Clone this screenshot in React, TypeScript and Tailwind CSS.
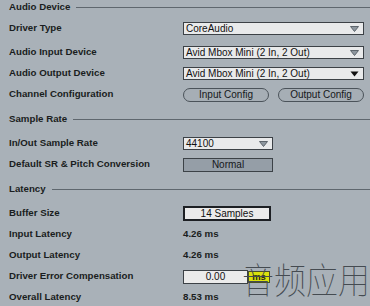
import type { ReactNode } from "react";

const labelFont = { fontFamily: '"Liberation Sans", Arial, sans-serif' };

const Arrow = ({ solid }: { solid?: boolean }) => (
  <svg width="9" height="6" viewBox="0 0 9 6" className="shrink-0">
    {solid ? (
      <path d="M0.5 0.5 H8.5 L4.5 5.5 Z" fill="#111" />
    ) : (
      <path d="M0.5 0.5 H8.5 L4.5 5.5 Z" fill="#8e979f" stroke="#5d656c" strokeWidth="1" />
    )}
  </svg>
);

const Section = ({ title, className }: { title: string; className?: string }) => (
  <div className={`flex h-[15px] items-center pl-[9px] ${className ?? ""}`}>
    <span className="text-[9.7px] font-bold text-[#1a1d20]">{title}</span>
    <div className="ml-[6px] h-px flex-1 bg-[#5f676e]" />
  </div>
);

const Row = ({
  label,
  children,
  className,
}: {
  label: string;
  children?: ReactNode;
  className?: string;
}) => (
  <div className={`flex h-[21px] items-center ${className ?? ""}`}>
    <div className="w-[183px] shrink-0 pl-[9px] text-[9.7px] font-bold text-[#1a1d20]">
      {label}
    </div>
    <div className="flex items-center">{children}</div>
  </div>
);

const Dropdown = ({
  value,
  width,
  solid,
}: {
  value: string;
  width: string;
  solid?: boolean;
}) => (
  <div
    className={`flex h-[13px] items-center justify-between border border-[#3c4146] bg-[#e9eaeb] pl-[2px] pr-[4px] text-[10px] leading-none text-[#111] ${width}`}
  >
    <span>{value}</span>
    <Arrow solid={solid} />
  </div>
);

const Pill = ({ text, width }: { text: string; width: string }) => (
  <div
    className={`flex h-[14px] items-center justify-center rounded-full border border-[#4b535a] bg-[#a6aeb5] text-[10px] leading-none text-[#15181b] ${width}`}
  >
    {text}
  </div>
);

export default function App() {
  return (
    <div
      className="relative h-[306px] w-[370px] overflow-hidden bg-[#a9b1b8]"
      style={labelFont}
    >
      <Section title="Audio Device" />
      <Row label="Driver Type" className="mt-[3px]">
        <Dropdown value="CoreAudio" width="w-[181px]" />
      </Row>
      <Row label="Audio Input Device" className="mt-[3px]">
        <Dropdown value="Avid Mbox Mini (2 In, 2 Out)" width="w-[181px]" />
      </Row>
      <Row label="Audio Output Device">
        <Dropdown value="Avid Mbox Mini (2 In, 2 Out)" width="w-[181px]" solid />
      </Row>
      <Row label="Channel Configuration">
        <div className="flex gap-[9px]">
          <Pill text="Input Config" width="w-[86px]" />
          <Pill text="Output Config" width="w-[86px]" />
        </div>
      </Row>

      <Section title="Sample Rate" className="mt-[7px]" />
      <Row label="In/Out Sample Rate" className="mt-[6px]">
        <Dropdown value="44100" width="w-[90px]" />
      </Row>
      <Row label="Default SR & Pitch Conversion">
        <div className="flex h-[14px] w-[90px] items-center justify-center border border-[#3c4247] bg-[#959ea7] text-[10px] leading-none text-[#15181b]">
          Normal
        </div>
      </Row>

      <Section title="Latency" className="mt-[7px]" />
      <Row label="Buffer Size" className="mt-[6px]">
        <div className="flex h-[15px] w-[88px] items-center justify-center border-2 border-[#1d2024] bg-[#ebebeb] text-[10px] leading-none text-[#111]">
          14 Samples
        </div>
      </Row>
      <Row label="Input Latency">
        <span className="text-[9.7px] font-bold text-[#1a1d20]">4.26 ms</span>
      </Row>
      <Row label="Output Latency">
        <span className="text-[9.7px] font-bold text-[#1a1d20]">4.26 ms</span>
      </Row>
      <Row label="Driver Error Compensation">
        <div className="flex items-center">
          <div className="flex h-[14px] w-[65px] items-center justify-center border border-[#3c4146] bg-[#ebebeb] text-[10px] leading-none text-[#111]">
            0.00
          </div>
          <div className="flex h-[12px] w-[22px] items-center justify-center border border-[#4a4f2a] bg-[#dbe30c] text-[9.5px] font-bold leading-none text-[#2a2d10]">
            ms
          </div>
        </div>
      </Row>
      <Row label="Overall Latency">
        <span className="text-[9.7px] font-bold text-[#1a1d20]">8.53 ms</span>
      </Row>

      <div
        className="absolute left-[242px] top-[259px] origin-top scale-y-[1.15] text-[32px] font-thin leading-none text-[#454b51]"
        style={{ fontFamily: '"Noto Sans CJK SC", sans-serif' }}
      >
        音频应用
      </div>
    </div>
  );
}
